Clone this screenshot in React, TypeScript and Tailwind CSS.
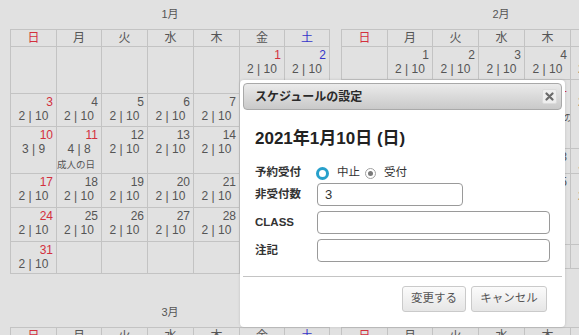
import React from "react";

const FONT = "font-['Liberation_Sans','Noto_Sans_CJK_JP',sans-serif]";
const COLS = "grid grid-cols-[46px_45px_46px_46px_46px_45px_45px]";

type Cell = { d?: number; c?: string; col?: "r" | "b" | "n"; hol?: string } | null;

const colorOf = (col?: string) =>
  col === "r" ? "text-[#d3303d]" : col === "b" ? "text-[#3535c9]" : "text-[#555]";

function DayCell({ cell }: { cell: Cell }) {
  return (
    <div className="border-r border-b border-[#c3c3c3] px-[3px] pt-[1px] overflow-hidden">
      {cell && cell.d !== undefined && (
        <div className={`text-right text-[12px] leading-[14px] ${colorOf(cell.col)}`}>{cell.d}</div>
      )}
      {cell && cell.c && (
        <div className="text-center text-[12px] leading-[14px] text-[#555]">{cell.c}</div>
      )}
      {cell && cell.hol && (
        <div className="-ml-[3px] mt-[2px] whitespace-nowrap text-[9.5px] leading-[14px] text-[#555]">{cell.hol}</div>
      )}
    </div>
  );
}

function Header() {
  const days: [string, string][] = [
    ["日", "text-[#d3303d]"],
    ["月", "text-[#555]"],
    ["火", "text-[#555]"],
    ["水", "text-[#555]"],
    ["木", "text-[#555]"],
    ["金", "text-[#555]"],
    ["土", "text-[#3535c9]"],
  ];
  return (
    <div className={`${COLS} h-[17px]`}>
      {days.map(([d, c]) => (
        <div key={d} className={`border-r border-b border-[#c3c3c3] text-center text-[12px] leading-[16px] ${c}`}>
          {d}
        </div>
      ))}
    </div>
  );
}

function Month({ title, rows, heights }: { title: string; rows: Cell[][]; heights: string[] }) {
  return (
    <div className="w-[320px]">
      <div className="flex h-[29px] items-center justify-center text-[11px] text-[#555]">{title}</div>
      <div className="border-l border-t border-[#c3c3c3]">
        <Header />
        {rows.map((r, i) => (
          <div key={i} className={`${COLS} ${heights[i]}`}>
            {r.map((cell, j) => (
              <DayCell key={j} cell={cell} />
            ))}
          </div>
        ))}
      </div>
    </div>
  );
}

const std = "2 | 10";
function week(start: number, end: number, offset = 0, special: Record<number, Partial<NonNullable<Cell>>> = {}): Cell[] {
  const out: Cell[] = [];
  for (let i = 0; i < offset; i++) out.push(null);
  for (let d = start; d <= end; d++) {
    const idx = out.length;
    const col = idx === 0 ? "r" : idx === 6 ? "b" : "n";
    out.push({ d, c: std, col, ...(special[d] || {}) });
  }
  while (out.length < 7) out.push(null);
  return out;
}

const jan: Cell[][] = [
  week(1, 2, 5, { 1: { col: "r" } }),
  week(3, 9),
  week(10, 16, 0, { 10: { c: "3 | 9" }, 11: { c: "4 | 8", col: "r", hol: "成人の日" } }),
  week(17, 23),
  week(24, 30),
  week(31, 31),
];
const janH = ["h-[47px]", "h-[33px]", "h-[47px]", "h-[34px]", "h-[34px]", "h-[32px]"];

const feb: Cell[][] = [
  week(1, 6, 1),
  week(7, 13, 0, { 11: { col: "r", hol: "建国記念の日" } }),
  week(14, 20),
  week(21, 27, 0, { 23: { col: "r", hol: "天皇誕生日" } }),
  week(28, 28),
];
const febH = ["h-[33px]", "h-[69px]", "h-[25px]", "h-[71px]", "h-[24px]"];

const mar: Cell[][] = [week(1, 6, 1), week(7, 13)];
const apr: Cell[][] = [week(1, 3, 4), week(4, 10)];
const smallH = ["h-[34px]", "h-[34px]"];

function Modal() {
  return (
    <div className="absolute left-[240px] top-[80px] h-[247px] w-[325px] rounded-[4px] bg-white p-[3px] shadow-[0_0_3px_rgba(0,0,0,0.15)]">
      <div className="flex h-[27px] items-center justify-between rounded-[4px] border border-[#a9a9a9] bg-linear-to-b from-[#ebebeb] to-[#c9c9c9] pl-[11px] pr-[4px]">
        <span className="text-[12px] font-bold text-[#2a2a2a]">スケジュールの設定</span>
        <span className="flex h-[15px] w-[15px] items-center justify-center rounded-[2px] border border-[#dcdcdc] bg-[#eeeeee]">
          <svg width="9" height="9" viewBox="0 0 9 9">
            <path d="M1.5 1.5 L7.5 7.5 M7.5 1.5 L1.5 7.5" stroke="#6a6a6a" strokeWidth="2.2" strokeLinecap="round" />
          </svg>
        </span>
      </div>
      <div className="px-[12px]">
        <div className="mt-[17px] h-[24px] text-[17px] font-bold leading-[24px] text-[#222]">2021年1月10日 (日)</div>
        <div className="mt-[14px] flex h-[16px] items-center">
          <span className="w-[61px] text-[11.5px] font-bold text-[#333]">予約受付</span>
          <span className="h-[13px] w-[13px] rounded-full border-[3px] border-[#27a0cb] bg-white" />
          <span className="ml-[8px] text-[11.5px] text-[#333]">中止</span>
          <span className="ml-[5px] flex h-[11px] w-[11px] items-center justify-center rounded-full border border-[#a0a0a0] bg-white">
            <span className="h-[5px] w-[5px] rounded-full bg-[#7a7a7a]" />
          </span>
          <span className="ml-[8px] text-[11.5px] text-[#333]">受付</span>
        </div>
        <div className="mt-[2px] flex flex-col gap-[5px]">
          <div className="flex h-[23px] items-center">
            <span className="w-[62px] text-[11.5px] font-bold text-[#333]">非受付数</span>
            <div className="flex h-[23px] w-[146px] items-center rounded-[4px] border border-[#9a9a9a] pl-[7px] text-[13px] text-[#333]">
              3
            </div>
          </div>
          <div className="flex h-[23px] items-center">
            <span className="w-[62px] text-[11.5px] font-bold text-[#333]">CLASS</span>
            <div className="h-[23px] w-[233px] rounded-[4px] border border-[#9a9a9a]" />
          </div>
          <div className="flex h-[23px] items-center">
            <span className="w-[62px] text-[11.5px] font-bold text-[#333]">注記</span>
            <div className="h-[23px] w-[233px] rounded-[4px] border border-[#9a9a9a]" />
          </div>
        </div>
      </div>
      <div className="mt-[14px] h-px bg-[#c4c4c4]" />
      <div className="mt-[9px] flex justify-end gap-[5px] pr-[15px]">
        <div className="flex h-[26px] w-[64px] items-center justify-center rounded-[3px] border border-[#cacaca] bg-linear-to-b from-[#fbfbfb] to-[#e6e6e6] text-[11.5px] text-[#555]">
          変更する
        </div>
        <div className="flex h-[26px] w-[76px] items-center justify-center rounded-[3px] border border-[#cacaca] bg-linear-to-b from-[#fbfbfb] to-[#e6e6e6] text-[11.5px] text-[#555]">
          キャンセル
        </div>
      </div>
    </div>
  );
}

export default function App() {
  return (
    <div className={`relative h-[335px] w-[579px] overflow-hidden bg-[#e1e1e1] ${FONT}`}>
      <div className="grid grid-cols-[320px_320px] items-start gap-x-[11px] gap-y-[24px] pl-[10px]">
        <Month title="1月" rows={jan} heights={janH} />
        <Month title="2月" rows={feb} heights={febH} />
        <Month title="3月" rows={mar} heights={smallH} />
        <Month title="4月" rows={apr} heights={smallH} />
      </div>
      <Modal />
    </div>
  );
}
